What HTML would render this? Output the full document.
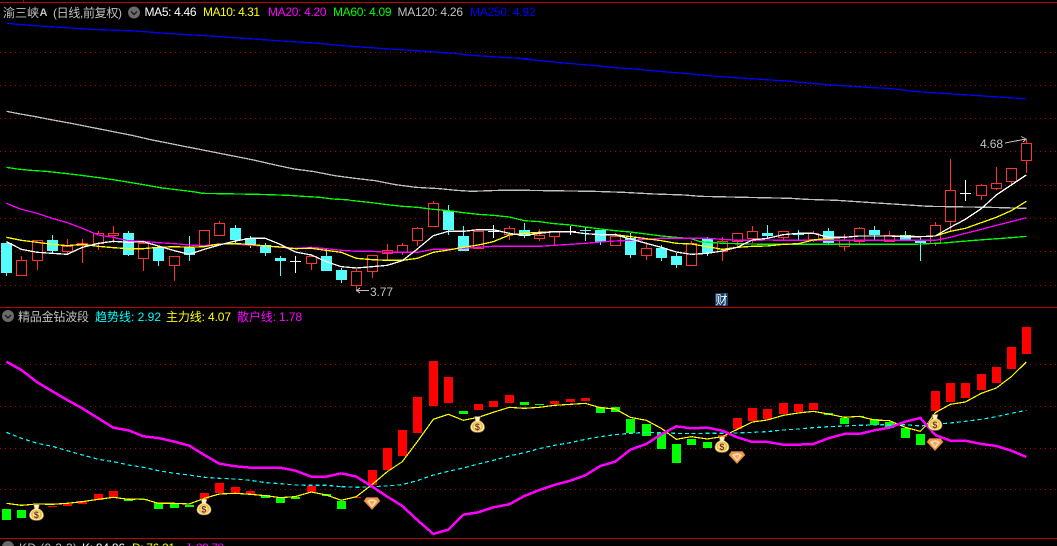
<!DOCTYPE html>
<html><head><meta charset="utf-8"><style>
html,body{margin:0;padding:0;background:#000;width:1057px;height:546px;overflow:hidden}
svg{display:block;position:absolute;left:0;top:0}
text{font-family:"Liberation Sans","WenQuanYi Zen Hei","Noto Sans CJK SC",sans-serif;font-size:12px}
polyline{fill:none;vector-effect:non-scaling-stroke;stroke-linejoin:miter}
.g{stroke:#b00000;stroke-width:1;stroke-dasharray:1 4;shape-rendering:crispEdges}
</style></head><body>
<svg width="1057" height="546" viewBox="0 0 1057 546">
<rect width="1057" height="546" fill="#000"/>
<!-- frames -->
<g shape-rendering="crispEdges" stroke="#c00000" fill="none">
<path d="M0 2.5H1057M23.5 0V2M0 307.5H1057M0 538.5H1057"/>
</g>
<!-- grids -->
<path class="g" d="M0 52.5H1057M0 85.5H1057M0 118.5H1057M0 151.5H1057M0 185.5H1057M0 218.5H1057M0 251.5H1057M0 285.5H1057M0 364.5H1057M0 406.5H1057M0 448.5H1057M0 489.5H1057" fill="none"/>

<!-- wicks -->
<g shape-rendering="crispEdges" fill="none">
<path stroke="#ff3232" d="M21.5 256V275M37.5 240V270M67.5 239V254M82.5 239V263M98.5 231V250M113.5 226V243M143.5 241V271M174.5 256V281M204.5 230V247M219.5 221V235M311.5 254V270M356.5 269V291M372.5 255V278M387.5 244V260M402.5 243V255M417.5 227V246M433.5 201V226M509.5 226V240M539.5 229V241M554.5 231V245M615.5 233V245M646.5 242V260M691.5 241V265M722.5 237V261M737.5 233V247M752.5 226V243M783.5 231V241M813.5 231V242M844.5 234V251M859.5 227V245M889.5 231V241M935.5 222V246M950.5 159V232M981.5 184V200M996.5 167V190M1011.5 168V184M1026.5 139V173"/>
<path stroke="#54fcfc" d="M6.5 243V276M52.5 235V253M128.5 231V256M158.5 247V266M189.5 236V261M235.5 225V243M250.5 236V248M265.5 243V256M280.5 256V276M326.5 251V271M341.5 268V283M448.5 205V235M463.5 226V251M524.5 223V238M600.5 230V245M630.5 233V258M661.5 245V261M676.5 253V268M707.5 237V256M767.5 225V238M798.5 230V240M828.5 228V244M874.5 226V241M905.5 231V241M920.5 238V261M585.5 227V241M580 230.5H591"/>
<path stroke="#fff" d="M295.5 256V273M290 261.5H301M493.5 225V238M488 231.5H499M570.5 226V235M565 231.5H576M965.5 180V201M960 193.5H971"/>
</g>
<!-- bodies red -->
<path shape-rendering="crispEdges" fill="#000" stroke="#ff3232" d="M16.5 260.5h10v15h-10zM32.5 240.5h10v20h-10zM62.5 246.5h10v5h-10zM77.5 243.5h10v2h-10zM93.5 233.5h10v10h-10zM108.5 233.5h10v2h-10zM138.5 243.5h10v15h-10zM169.5 256.5h10v9h-10zM199.5 230.5h10v15h-10zM214.5 223.5h10v12h-10zM306.5 256.5h10v7h-10zM351.5 271.5h10v14h-10zM367.5 255.5h10v16h-10zM382.5 250.5h10v3h-10zM397.5 245.5h10v7h-10zM412.5 228.5h10v12h-10zM428.5 203.5h10v23h-10zM473.5 231.5h10v17h-10zM504.5 228.5h10v6h-10zM534.5 235.5h10v3h-10zM549.5 231.5h10v5h-10zM610.5 236.5h10v9h-10zM641.5 248.5h10v7h-10zM686.5 243.5h10v22h-10zM717.5 241.5h10v10h-10zM732.5 233.5h10v8h-10zM747.5 231.5h10v7h-10zM778.5 231.5h10v6h-10zM808.5 233.5h10v6h-10zM839.5 240.5h10v6h-10zM854.5 228.5h10v13h-10zM884.5 235.5h10v6h-10zM930.5 225.5h10v18h-10zM945.5 190.5h10v31h-10zM976.5 185.5h10v10h-10zM991.5 183.5h10v5h-10zM1006.5 168.5h10v13h-10zM1021.5 143.5h10v17h-10z"/>
<!-- bodies cyan -->
<path shape-rendering="crispEdges" fill="#54fcfc" d="M1 243h11v30H1zM47 240h11v11H47zM123 233h11v22h-11zM153 247h11v14h-11zM184 248h11v7h-11zM230 228h11v12h-11zM245 238h11v7h-11zM260 245h11v8h-11zM275 258h11v3h-11zM321 256h11v15h-11zM336 270h11v10h-11zM443 211h11v19h-11zM458 236h11v15h-11zM519 230h11v6h-11zM595 230h11v12h-11zM625 238h11v17h-11zM656 248h11v10h-11zM671 256h11v9h-11zM702 239h11v14h-11zM762 233h11v3h-11zM793 233h11v2h-11zM823 231h11v12h-11zM869 230h11v5h-11zM900 235h11v5h-11zM915 240h11v3h-11z"/>

<g shape-rendering="crispEdges" stroke-width="1.3">
<!-- MA250 blue -->
<polyline transform="translate(0,15) scale(.338,.3333)" stroke="#0000ff" points="19,25 90,31 180,37 270,43 400,48 490,55 590,61 675,67 765,73 850,79 945,85 1000,91 1080,97 1170,103 1260,109 1340,115 1395,121 1485,127 1568,132"/>
<polyline transform="translate(527,15) scale(.338,.3333)" stroke="#0000ff" points="-13,132 60,139 120,145 195,151 250,157 330,163 390,169 465,175 525,181 600,187 690,193 780,199 840,205 915,211 1005,217 1080,221 1140,229 1230,235 1320,241 1410,247 1475,251"/>
<!-- MA120 gray -->
<polyline transform="translate(0,15) scale(.338,.3333)" stroke="#c0c0c0" points="19,289 60,297 100,304 145,313 205,324 270,337 330,349 390,361 450,375 510,387 570,399 630,411 690,423 750,435 810,449 870,462 930,470 990,482 1050,490 1110,497 1170,509 1230,517 1300,521 1350,526 1395,529 1480,526 1568,526"/>
<polyline transform="translate(527,15) scale(.338,.3333)" stroke="#c0c0c0" points="-13,526 195,529 285,532 375,537 465,540"/>
<polyline transform="translate(700,130) scale(.3333)" stroke="#c0c0c0" points="-48,195 0,199 135,202 273,205 318,208 410,211 456,214 500,217 547,220 593,223 640,226 685,229 865,232 979,235"/>
<!-- MA60 green -->
<polyline transform="translate(0,15) scale(.338,.3333)" stroke="#00ff00" points="19,457 50,462 90,466 135,469 190,475 240,481 300,489 360,498 430,510 480,519 570,530 600,535"/>
<polyline transform="translate(0,190) scale(.3333)" stroke="#00ff00" points="603,10 775,13 865,16 910,19 960,22 1000,27 1050,30"/>
<polyline transform="translate(350,190) scale(.3333)" stroke="#00ff00" points="0,31 57,37 112,44 157,49 202,52 250,58 295,62 340,68 385,73 430,76 478,81 523,92 568,95 613,101 661,105 706,111 751,117 796,122 841,126 889,132 934,138 979,142 1024,146"/>
<polyline transform="translate(700,130) scale(.3333)" stroke="#00ff00" points="-26,326 0,335 67,340 200,343 640,343 730,339 800,333 865,328 935,323 979,319"/>
<!-- MA20 magenta -->
<polyline transform="translate(0,190) scale(.3333)" stroke="#ff00ff" points="19,40 64,58 112,70 157,85 202,98 247,115 295,135 340,142 385,152 430,154 475,158 523,161 568,165 613,167 658,162 706,162 751,166 796,168 841,172 886,175 934,172 979,176 1024,181"/>
<polyline transform="translate(350,190) scale(.3333)" stroke="#ff00ff" points="-26,181 19,184 67,184 112,187 157,187 202,187 250,178 295,178 340,175 385,172 430,169 478,169 523,169 568,169 613,166 661,163 706,160 751,156 796,153 841,151 889,148 934,145 979,145 1024,145"/>
<polyline transform="translate(700,130) scale(.3333)" stroke="#ff00ff" points="-26,325 22,325 67,328 112,331 157,331 202,330 250,331 295,331 340,331 385,331 433,331 478,331 523,331 568,331 616,331 661,331 706,331 751,322 796,310 844,298 889,286 934,275 979,263"/>
<!-- MA10 yellow -->
<polyline transform="translate(0,190) scale(.3333)" stroke="#ffff00" points="19,142 64,151 112,157 157,163 202,167 247,163 295,169 340,173 385,176 430,176 475,172 523,170 568,172 613,170 658,162 706,161 751,163 796,168 841,171 886,176 934,175 979,181 1024,187"/>
<polyline transform="translate(350,190) scale(.3333)" stroke="#ffff00" points="-26,187 19,205 67,209 112,211 157,211 202,205 250,187 295,180 340,172 385,165 430,155 478,135 523,130 568,127 613,125 661,125 706,131 751,134 796,134 841,140 889,146 934,152 979,160 1024,162"/>
<polyline transform="translate(700,130) scale(.3333)" stroke="#ffff00" points="-26,342 22,350 67,358 112,352 157,349 202,348 250,343 295,341 340,330 385,325 433,322 478,318 523,318 568,318 616,318 661,320 706,318 751,304 796,295 844,278 889,262 934,242 979,214"/>
<!-- MA5 white -->
<polyline transform="translate(0,190) scale(.3333)" stroke="#ffffff" points="19,155 64,178 112,187 157,190 202,193 247,172 295,160 340,154 385,157 430,155 475,168 523,182 568,193 613,178 658,165 706,153 751,145 796,145 841,163 886,186 934,195 979,215 1024,230"/>
<polyline transform="translate(350,190) scale(.3333)" stroke="#ffffff" points="-26,230 19,234 67,230 112,226 157,212 202,177 250,137 295,124 340,124 385,119 430,119 478,130 523,137 568,130 613,125 661,125 706,131 751,134 796,134 841,147 889,160 934,172 979,186 1024,193"/>
<polyline transform="translate(700,130) scale(.3333)" stroke="#ffffff" points="-26,373 22,370 67,363 112,352 157,330 202,325 250,314 295,310 340,310 385,322 433,322 478,318 523,318 568,318 616,320 661,320 706,318 751,292 796,268 844,236 889,195 934,165 979,135"/>
</g>

<!-- price labels -->
<path d="M356 290.5H369M360 288L356.5 290.5L360 293" stroke="#c0c0c0" fill="none" shape-rendering="crispEdges"/>
<text x="370" y="296" fill="#c0c0c0" textLength="23" lengthAdjust="spacing">3.77</text>
<text x="980" y="148" fill="#c0c0c0" textLength="23" lengthAdjust="spacing">4.68</text>
<path d="M1005 143L1026 139M1021 136.5L1026 139L1023 142" stroke="#c0c0c0" fill="none" shape-rendering="crispEdges"/>
<!-- cai badge -->
<rect x="715" y="293" width="13" height="13" fill="#12406e"/>
<text x="715.5" y="304" fill="#fff" style="font-size:12px">财</text>

<!-- bars lower -->
<path shape-rendering="crispEdges" fill="#ff0000" d="M48 506h9v1h-9zM63 504h9v2h-9zM78 501h9v3h-9zM94 494h9v6h-9zM109 491h9v6h-9zM200 493h9v6h-9zM215 483h9v10h-9zM231 487h9v6h-9zM246 491h9v3h-9zM307 486h9v6h-9zM352 497h9v1h-9zM368 470h9v15h-9zM383 448h9v22h-9zM398 430h9v26h-9zM413 397h9v36h-9zM429 361h9v45h-9zM444 377h9v26h-9zM474 404h9v6h-9zM489 401h9v6h-9zM505 395h9v8h-9zM550 401h9v3h-9zM566 399h9v3h-9zM581 398h9v3h-9zM718 435h9v2h-9zM733 418h9v11h-9zM748 408h9v13h-9zM763 409h9v10h-9zM779 403h9v11h-9zM794 404h9v8h-9zM809 403h9v7h-9zM931 391h9v20h-9zM946 383h9v19h-9zM961 383h9v15h-9zM977 374h9v16h-9zM992 367h9v16h-9zM1007 347h9v22h-9zM1022 327h9v27h-9z"/>
<path shape-rendering="crispEdges" fill="#00ff00" d="M2 509h9v11H2zM17 510h9v8h-9zM124 499h9v2h-9zM139 499h9v1h-9zM154 503h9v6h-9zM170 504h9v4h-9zM185 505h9v2h-9zM261 495h9v3h-9zM276 498h9v5h-9zM291 497h9v2h-9zM322 494h9v2h-9zM337 501h9v8h-9zM459 411h9v3h-9zM520 402h9v3h-9zM535 404h9v1h-9zM596 407h9v6h-9zM611 407h9v5h-9zM626 419h9v14h-9zM642 424h9v12h-9zM657 433h9v16h-9zM672 444h9v19h-9zM687 439h9v6h-9zM703 442h9v6h-9zM824 413h9v2h-9zM840 418h9v6h-9zM855 416h9v1h-9zM870 419h9v6h-9zM885 422h9v6h-9zM901 428h9v10h-9zM916 434h9v11h-9z"/>

<g shape-rendering="crispEdges" stroke-width="1.2">
<!-- trend cyan dashed -->
<polyline transform="translate(0,305) scale(.3333)" stroke="#00ffff" stroke-dasharray="4 3" points="19,382 64,400 112,415 157,424 202,437 247,450 295,463 340,470 385,480 430,487 475,497 523,505 568,510 613,517 658,520 706,522 751,526 796,533 841,536 886,540 934,541 979,541 1024,545"/>
<polyline transform="translate(350,340) scale(.3333)" stroke="#00ffff" stroke-dasharray="4 3" points="-26,440 19,442 67,440 112,438 157,434 202,422 250,405 295,394 340,384 385,372 430,361 478,348 523,338 568,326 613,316 661,308 706,298 751,290 796,284 841,280 889,277 934,278 979,280 1024,281"/>
<polyline transform="translate(700,320) scale(.3333)" stroke="#00ffff" stroke-dasharray="4 3" points="-26,341 22,340 67,340 112,339 157,337 202,335 250,330 295,327 340,323 385,320 433,318 478,316 523,315 568,314 616,314 661,318 706,313 751,309 796,304 844,298 889,290 934,280 979,271"/>
<!-- main yellow -->
<polyline transform="translate(0,305) scale(.3333)" stroke="#ffff00" points="19,595 64,601 112,597 157,598 202,595 247,590 295,583 340,577 385,583 430,582 475,595 523,595 568,597 613,580 658,567 706,565 751,568 796,572 841,578 886,575 934,561 979,570 1024,586"/>
<polyline transform="translate(350,340) scale(.3333)" stroke="#ffff00" points="-26,481 19,470 67,433 112,395 157,365 202,305 250,238 295,223 340,241 385,232 430,217 478,202 523,205 568,202 613,196 661,193 706,190 751,203 796,207 841,232 889,241 934,265 979,298 1024,290"/>
<polyline transform="translate(700,320) scale(.3333)" stroke="#ffff00" points="-26,350 22,357 67,350 112,328 157,306 202,300 250,286 295,279 340,274 385,282 433,292 478,289 523,300 568,302 616,322 661,334 680,315 706,278 751,253 796,246 844,220 889,204 934,170 979,126"/>
<!-- retail magenta -->
<polyline transform="translate(0,305) scale(.3333)" stroke="#ff00ff" stroke-width="2.5" points="19,170 64,195 112,232 157,259 202,285 247,310 295,340 340,368 385,376 430,394 475,399 523,410 568,422 613,450 658,476 706,484 751,488 796,488 841,488 886,497 934,515 979,515 1024,505"/>
<polyline transform="translate(350,340) scale(.3333)" stroke="#ff00ff" stroke-width="2.5" points="-26,400 19,410 67,440 112,470 157,498 202,540 250,582 295,569 340,524 385,517 430,502 478,493 523,468 568,450 613,435 661,422 706,406 751,378 796,365 841,329 889,312 934,283 979,259 1024,265"/>
<polyline transform="translate(700,320) scale(.3333)" stroke="#ff00ff" stroke-width="2.5" points="-26,325 22,323 67,332 112,352 157,366 202,366 250,374 295,374 340,372 385,355 433,342 478,342 523,331 568,323 616,305 661,294 706,345 751,362 796,362 844,372 889,378 934,392 979,411"/>
</g>

<!-- money bags -->
<g transform="translate(36.5,512.5)"><path d="M-3-8H3L2-4C6-2 7.5 1 7 4 6 7 3 8 0 8-3 8-6 7-7 4-7.5 1-6-2-2-4Z" fill="#fff3c0" stroke="#8a6a30" stroke-width=".6"/><ellipse cy="2" rx="5.5" ry="5" fill="#eec040"/><ellipse cy="2" rx="3.6" ry="3.8" fill="#fbe88a"/><text x="-2.7" y="5.5" fill="#7b2d2d" style="font-size:9px;font-weight:bold">$</text></g>
<g transform="translate(204,507)"><path d="M-3-8H3L2-4C6-2 7.5 1 7 4 6 7 3 8 0 8-3 8-6 7-7 4-7.5 1-6-2-2-4Z" fill="#fff3c0" stroke="#8a6a30" stroke-width=".6"/><ellipse cy="2" rx="5.5" ry="5" fill="#eec040"/><ellipse cy="2" rx="3.6" ry="3.8" fill="#fbe88a"/><text x="-2.7" y="5.5" fill="#7b2d2d" style="font-size:9px;font-weight:bold">$</text></g>
<g transform="translate(477.5,424.5)"><path d="M-3-8H3L2-4C6-2 7.5 1 7 4 6 7 3 8 0 8-3 8-6 7-7 4-7.5 1-6-2-2-4Z" fill="#fff3c0" stroke="#8a6a30" stroke-width=".6"/><ellipse cy="2" rx="5.5" ry="5" fill="#eec040"/><ellipse cy="2" rx="3.6" ry="3.8" fill="#fbe88a"/><text x="-2.7" y="5.5" fill="#7b2d2d" style="font-size:9px;font-weight:bold">$</text></g>
<g transform="translate(722,444.5)"><path d="M-3-8H3L2-4C6-2 7.5 1 7 4 6 7 3 8 0 8-3 8-6 7-7 4-7.5 1-6-2-2-4Z" fill="#fff3c0" stroke="#8a6a30" stroke-width=".6"/><ellipse cy="2" rx="5.5" ry="5" fill="#eec040"/><ellipse cy="2" rx="3.6" ry="3.8" fill="#fbe88a"/><text x="-2.7" y="5.5" fill="#7b2d2d" style="font-size:9px;font-weight:bold">$</text></g>
<g transform="translate(935,422.5)"><path d="M-3-8H3L2-4C6-2 7.5 1 7 4 6 7 3 8 0 8-3 8-6 7-7 4-7.5 1-6-2-2-4Z" fill="#fff3c0" stroke="#8a6a30" stroke-width=".6"/><ellipse cy="2" rx="5.5" ry="5" fill="#eec040"/><ellipse cy="2" rx="3.6" ry="3.8" fill="#fbe88a"/><text x="-2.7" y="5.5" fill="#7b2d2d" style="font-size:9px;font-weight:bold">$</text></g>
<!-- diamonds -->
<g transform="translate(372,503.5)"><path d="M-5.5-6H5.5L8-2.5L0 6L-8-2.5Z" fill="#ef9a50" stroke="#c87830" stroke-width=".6"/><path d="M-5-2C-3-5 3-5 5-2L0 4Z" fill="#ffd9a8"/><path d="M-2.5-1.5C-1-3 1-3 2.5-1.5L0 2Z" fill="#f0a868"/></g>
<g transform="translate(737,457.5)"><path d="M-5.5-6H5.5L8-2.5L0 6L-8-2.5Z" fill="#ef9a50" stroke="#c87830" stroke-width=".6"/><path d="M-5-2C-3-5 3-5 5-2L0 4Z" fill="#ffd9a8"/><path d="M-2.5-1.5C-1-3 1-3 2.5-1.5L0 2Z" fill="#f0a868"/></g>
<g transform="translate(935,444.5)"><path d="M-5.5-6H5.5L8-2.5L0 6L-8-2.5Z" fill="#ef9a50" stroke="#c87830" stroke-width=".6"/><path d="M-5-2C-3-5 3-5 5-2L0 4Z" fill="#ffd9a8"/><path d="M-2.5-1.5C-1-3 1-3 2.5-1.5L0 2Z" fill="#f0a868"/></g>

<!-- header main -->
<text x="3" y="17" fill="#c0c0c0" textLength="36" lengthAdjust="spacing">渝三峡</text>
<text x="39.5" y="16" fill="#c0c0c0" style="font-size:11px;font-weight:bold">A</text>
<text x="53" y="17" fill="#c0c0c0" textLength="69" lengthAdjust="spacing">(日线,前复权)</text>
<circle cx="134" cy="12.5" r="6" fill="#6a6a6a"/><path d="M131 11.5L134 14.5L137 11.5" stroke="#111" fill="none" stroke-width="1.2"/>
<text x="144.5" y="16" fill="#ffffff" textLength="52" lengthAdjust="spacing">MA5: 4.46</text>
<text x="203" y="16" fill="#ffff00" textLength="57" lengthAdjust="spacing">MA10: 4.31</text>
<text x="268" y="16" fill="#ff00ff" textLength="58.5" lengthAdjust="spacing">MA20: 4.20</text>
<text x="333" y="16" fill="#00ff00" textLength="58.5" lengthAdjust="spacing">MA60: 4.09</text>
<text x="397.5" y="16" fill="#c0c0c0" textLength="65.5" lengthAdjust="spacing">MA120: 4.26</text>
<text x="470" y="16" fill="#0000ff" textLength="65.5" lengthAdjust="spacing">MA250: 4.92</text>

<!-- header lower -->
<circle cx="8" cy="316" r="6" fill="#6a6a6a"/><path d="M5 315L8 318L11 315" stroke="#111" fill="none" stroke-width="1.2"/>
<text x="18" y="321" fill="#c0c0c0" textLength="71" lengthAdjust="spacing">精品金钻波段</text>
<text x="95" y="321" fill="#00ffff" textLength="66" lengthAdjust="spacing">趋势线: 2.92</text>
<text x="166" y="321" fill="#ffff00" textLength="65" lengthAdjust="spacing">主力线: 4.07</text>
<text x="237" y="321" fill="#ff00ff" textLength="65" lengthAdjust="spacing">散户线: 1.78</text>

<!-- header KD -->
<circle cx="8" cy="547" r="6" fill="#6a6a6a"/>
<text x="19" y="552" fill="#c0c0c0" textLength="58" lengthAdjust="spacing">KD (9,3,3)</text>
<text x="82" y="552" fill="#ffffff" textLength="43" lengthAdjust="spacing">K: 84.86</text>
<text x="132" y="552" fill="#ffff00" textLength="43" lengthAdjust="spacing">D: 76.21</text>
<text x="185" y="552" fill="#ff00ff" textLength="39" lengthAdjust="spacing">J: 99.78</text>
</svg>
</body></html>
